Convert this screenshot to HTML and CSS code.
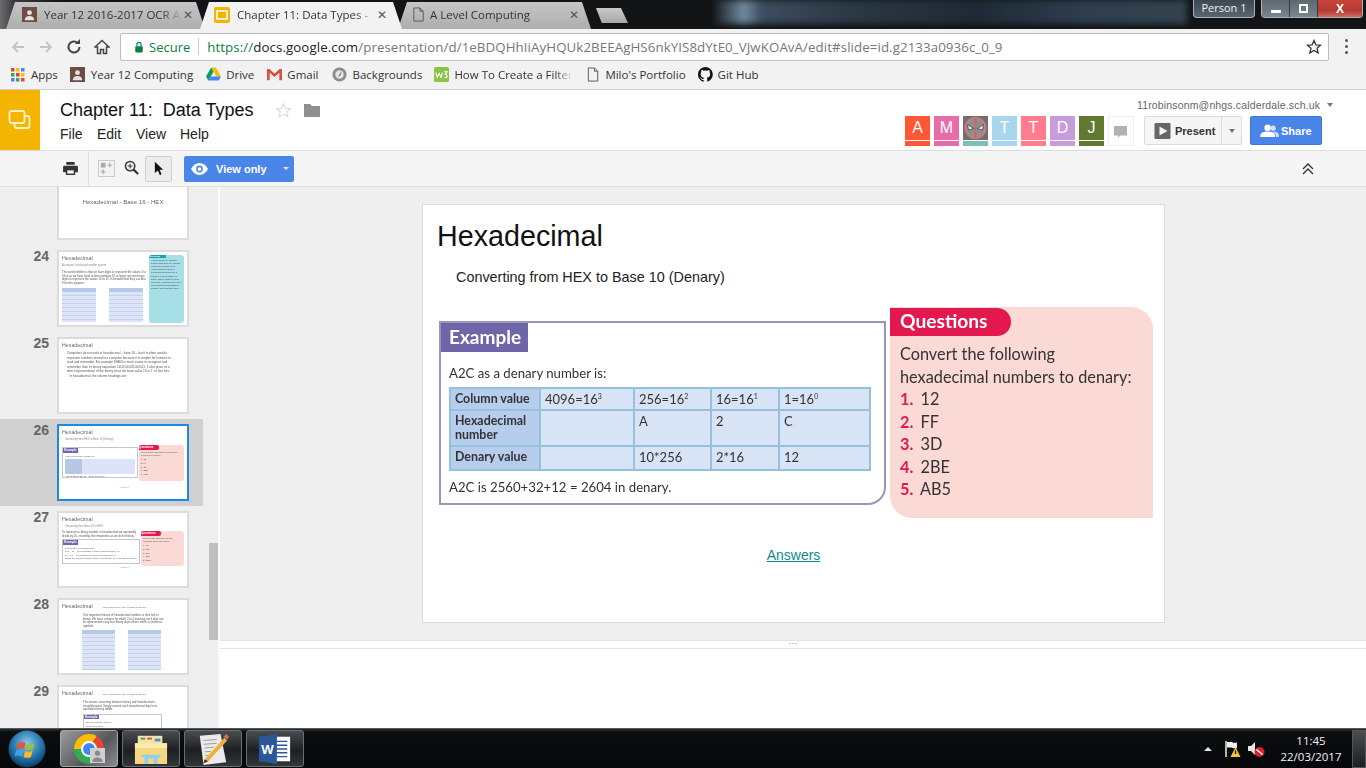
FILE: index.html
```html
<!DOCTYPE html>
<html lang="en">
<head>
<meta charset="utf-8">
<title>Chapter 11: Data Types</title>
<link rel="stylesheet" href="styles.css">
</head>
<body>
<div class="screen">

<header class="titlebar">
  <div class="tabs">
    <div class="tab tab-one">
      <svg class="fav" viewBox="0 0 16 16"><rect width="16" height="16" fill="#6d4c41"/><circle cx="8" cy="6" r="2.6" fill="#e8e0dc"/><path d="M3 14c0-3 2-4.5 5-4.5s5 1.500 5 4.500z" fill="#e8e0dc"/></svg>
      <span class="tab-title">Year 12 2016-2017 OCR A</span>
      <span class="tab-x">✕</span>
    </div>
    <div class="tab tab-two">
      <svg class="fav" viewBox="0 0 16 16"><rect width="16" height="16" rx="2" fill="#f4b400"/><rect x="3" y="4" width="10" height="8" fill="none" stroke="#fff" stroke-width="1.600"/></svg>
      <span class="tab-title">Chapter 11: Data Types -</span>
      <span class="tab-x">✕</span>
    </div>
    <div class="tab tab-three">
      <svg class="fav" viewBox="0 0 16 16"><path d="M3 1h6.500L13 4.500V15H3z M9.500 1v3.500H13" fill="none" stroke="#555" stroke-width="1"/></svg>
      <span class="tab-title">A Level Computing</span>
      <span class="tab-x">✕</span>
    </div>
    <div class="newtab"></div>
  </div>
  <div class="desktop-blur"></div>
  <div class="profile">Person 1</div>
  <div class="winbtns">
    <span class="wb"><i class="wb-min"></i></span>
    <span class="wb"><i class="wb-max"></i></span>
    <span class="wb wb-close">X</span>
  </div>
</header>

<div class="navbar">
  <svg class="nav-ic" viewBox="0 0 16 16"><path d="M14 8H3M8 3L3 8l5 5" fill="none" stroke="#c4c4c4" stroke-width="1.800"/></svg>
  <svg class="nav-ic" viewBox="0 0 16 16"><path d="M2 8h11M8 3l5 5-5 5" fill="none" stroke="#c4c4c4" stroke-width="1.800"/></svg>
  <svg class="nav-ic" viewBox="0 0 16 16"><path d="M13.500 8A5.500 5.500 0 1 1 11.800 4" fill="none" stroke="#444" stroke-width="2"/><path d="M9 5h5V0z" fill="#444"/></svg>
  <svg class="nav-ic" viewBox="0 0 16 16"><path d="M8 1.500L1 8h2.500v6.500h3v-4h3v4h3V8H15z" fill="none" stroke="#444" stroke-width="1.500"/></svg>
  <div class="omnibox">
    <svg class="lock" viewBox="0 0 12 14"><rect x="1.500" y="6" width="9" height="7.500" rx="1" fill="#0b8043"/><path d="M3.500 6V4a2.500 2.500 0 0 1 5 0v2" fill="none" stroke="#0b8043" stroke-width="1.400"/></svg>
    <span class="secure">Secure</span>
    <span class="omni-sep"></span>
    <span class="url"><b class="u-https">https://</b><b class="u-host">docs.google.com</b>/presentation/d/1eBDQHhIiAyHQUk2BEEAgHS6nkYIS8dYtE0_VJwKOAvA/edit#slide=id.g2133a0936c_0_9</span>
    <svg class="star" viewBox="0 0 16 16"><path d="M8 1.500l1.900 4.300 4.600.4-3.500 3 1.100 4.600L8 11.400l-4.100 2.400L5 9.200l-3.500-3 4.600-.4z" fill="none" stroke="#333" stroke-width="1.300"/></svg>
  </div>
  <div class="kebab"><i></i><i></i><i></i></div>
</div>

<nav class="bookmarks">
  <div class="bm bm-apps">
    <svg class="bm-ic" viewBox="0 0 14 14"><g><rect width="3.500" height="3.500" fill="#ea4335"/><rect x="5" width="3.500" height="3.500" fill="#fbbc05"/><rect x="10" width="3.500" height="3.500" fill="#4285f4"/><rect y="5" width="3.500" height="3.500" fill="#34a853"/><rect x="5" y="5" width="3.500" height="3.500" fill="#ea4335"/><rect x="10" y="5" width="3.500" height="3.500" fill="#fbbc05"/><rect y="10" width="3.500" height="3.500" fill="#4285f4"/><rect x="5" y="10" width="3.500" height="3.500" fill="#34a853"/><rect x="10" y="10" width="3.500" height="3.500" fill="#ea4335"/></g></svg>
    <span>Apps</span>
  </div>
  <div class="bm bm-year">
    <svg class="bm-ic" viewBox="0 0 16 16"><rect width="16" height="16" fill="#6d4c41"/><circle cx="8" cy="6" r="2.600" fill="#e8e0dc"/><path d="M3 14c0-3 2-4.500 5-4.500s5 1.500 5 4.500z" fill="#e8e0dc"/></svg>
    <span>Year 12 Computing</span>
  </div>
  <div class="bm bm-drive">
    <svg class="bm-ic" viewBox="0 0 16 15"><path d="M5.500 0h5l5.500 9.500h-5z" fill="#fbbc05"/><path d="M5.500 0L0 9.500 2.500 14l5.500-9.500z" fill="#0f9d58"/><path d="M2.500 14h11l2.500-4.500H5z" fill="#4285f4"/></svg>
    <span>Drive</span>
  </div>
  <div class="bm bm-gmail">
    <svg class="bm-ic" viewBox="0 0 16 14"><path d="M0 1h2.500L8 6l5.500-5H16v12h-3V5.500L8 10 3 5.500V13H0z" fill="#d9503f"/><path d="M3 5.500L8 10l5-4.500V13H3z" fill="#eee"/></svg>
    <span>Gmail</span>
  </div>
  <div class="bm bm-back">
    <svg class="bm-ic" viewBox="0 0 16 16"><circle cx="8" cy="8" r="7.500" fill="#8c8c8c"/><circle cx="8" cy="8" r="4.500" fill="#e4e4e4"/><path d="M10 4.500L6 11l3.500-2.500z" fill="#777"/></svg>
    <span>Backgrounds</span>
  </div>
  <div class="bm bm-how">
    <svg class="bm-ic" viewBox="0 0 16 16"><rect width="16" height="16" rx="2" fill="#8bc34a"/><path d="M2 6l1.500 5L5.500 7l2 4L9 6M11 5h3l-2 3c1.500 0 2 1 2 2s-1 2-3 1" fill="none" stroke="#fff" stroke-width="1.200"/></svg>
    <span class="fade">How To Create a Filter</span>
  </div>
  <div class="bm bm-milo">
    <svg class="bm-ic bm-doc" viewBox="0 0 12 16"><path d="M1 1h6.500L11 4.500V15H1z M7.500 1v3.500H11" fill="none" stroke="#555" stroke-width="1"/></svg>
    <span>Milo's Portfolio</span>
  </div>
  <div class="bm">
    <svg class="bm-ic" viewBox="0 0 16 16"><path fill="#111" d="M8 0a8 8 0 0 0-2.500 15.600c.4.100.5-.2.500-.4v-1.400c-2.200.5-2.700-1-2.700-1-.4-.9-.9-1.200-.9-1.200-.7-.5.100-.5.100-.5.800.1 1.200.8 1.200.8.700 1.200 1.900.9 2.300.7.100-.5.300-.9.500-1.100-1.800-.2-3.700-.9-3.700-4 0-.9.300-1.600.8-2.100-.1-.2-.4-1 .1-2.100 0 0 .7-.2 2.200.8a7.500 7.500 0 0 1 4 0c1.500-1 2.200-.8 2.200-.8.400 1.100.2 1.900.1 2.100.5.600.8 1.300.8 2.100 0 3.100-1.900 3.700-3.700 3.900.3.300.6.800.6 1.500v2.200c0 .2.100.5.600.4A8 8 0 0 0 8 0z"/></svg>
    <span>Git Hub</span>
  </div>
</nav>

<div class="appbar">
  <div class="logo">
    <svg viewBox="0 0 24 22" class="logo-ic"><rect x="6.500" y="7" width="15" height="12" rx="2" fill="none" stroke="#fff3c4" stroke-width="1.800"/><rect x="1.500" y="2" width="15" height="12" rx="2" fill="#f4b400" stroke="#fff3c4" stroke-width="1.800"/></svg>
  </div>
  <div class="docinfo">
    <div class="docrow">
      <span class="doctitle">Chapter 11:  Data Types</span>
      <svg class="docstar" viewBox="0 0 16 16"><path d="M8 1.500l1.900 4.300 4.600.4-3.500 3 1.100 4.600L8 11.400l-4.100 2.400L5 9.200l-3.500-3 4.600-.4z" fill="none" stroke="#d9d9d9" stroke-width="1"/></svg>
      <svg class="docfolder" viewBox="0 0 16 14"><path d="M0 1h6l2 2h8v11H0z" fill="#8f8f8f"/></svg>
    </div>
    <div class="menu"><span>File</span><span>Edit</span><span>View</span><span>Help</span></div>
  </div>
  <div class="appright">
    <div class="account">11robinsonm@nhgs.calderdale.sch.uk<i class="caret caret-gray"></i></div>
    <div class="collab">
      <div class="avatar av-a"><span>A</span></div>
      <div class="avatar av-m"><span>M</span></div>
      <div class="avatar av-d">
        <span class="dp"><svg viewBox="0 0 25 24"><rect width="25" height="24" fill="#6f6f6f"/><circle cx="12.500" cy="12" r="10" fill="#8e8e8e" stroke="#cf7a7e" stroke-width="1.800"/><rect x="11.500" y="2" width="2" height="20" fill="#c9656a"/><path d="M4.500 8.500l6 4-5 1.500z" fill="#eeeeee" stroke="#333" stroke-width=".7"/><path d="M20.500 8.500l-6 4 5 1.500z" fill="#eeeeee" stroke="#333" stroke-width=".7"/></svg></span>
      </div>
      <div class="avatar av-t1"><span>T</span></div>
      <div class="avatar av-t2"><span>T</span></div>
      <div class="avatar av-dd"><span>D</span></div>
      <div class="avatar av-j"><span>J</span></div>
      <div class="comment"><svg viewBox="0 0 14 14"><path d="M0 1h13v9.500H6l-2 2.500v-2.500H0z" fill="#b2b2b2"/></svg></div>
      <div class="present">
        <span class="present-main"><svg viewBox="0 0 16 16"><rect width="16" height="16" rx="1" fill="#666"/><path d="M5 3.500l8 4.500-8 4.500z" fill="#f5f5f5"/></svg>Present</span>
        <span class="present-drop"><i class="caret caret-gray"></i></span>
      </div>
      <div class="share"><svg viewBox="0 0 20 14"><circle cx="8" cy="4" r="3.500" fill="#fff"/><path d="M0 13c0-3.500 3.500-5 8-5s8 1.500 8 5v1H0z" fill="#fff"/><circle cx="14" cy="4.500" r="2.800" fill="#cfe0fb"/><path d="M13 8c3.500 0 7 1 7 4v2h-3c0-3-1.500-4.500-4-6z" fill="#cfe0fb"/></svg>Share</div>
    </div>
  </div>
</div>

<div class="toolbar">
  <svg class="tb-print" viewBox="0 0 16 14"><path d="M3.500 0h9v3h-9zM1.500 4h13A1.500 1.500 0 0 1 16 5.500V11h-3v3H3v-3H0V5.500A1.500 1.500 0 0 1 1.500 4z" fill="#333"/><rect x="4.500" y="9" width="7" height="3.500" fill="#f5f5f5"/></svg>
  <span class="tb-sep"></span>
  <svg class="tb-grid" viewBox="0 0 18 18"><rect x=".5" y=".5" width="17" height="17" fill="#f3f3f3" stroke="#c7c7c7"/><rect x="3" y="3" width="5" height="5" fill="#aaa"/><path d="M12.500 3v5M10 5.500h5M5.500 10v5M3 12.500h5" stroke="#aaa" stroke-width="1.200"/></svg>
  <svg class="tb-zoom" viewBox="0 0 16 16"><circle cx="6.500" cy="6.500" r="5" fill="none" stroke="#333" stroke-width="1.600"/><path d="M10 10l5 5" stroke="#333" stroke-width="2.400"/><path d="M6.500 4v5M4 6.500h5" stroke="#333" stroke-width="1.100"/></svg>
  <span class="tb-cursor"><svg viewBox="0 0 12 16"><path d="M1 0l10 9.500H6.800L9 15l-2 1-2.200-5.500L1 13.500z" fill="#111"/></svg></span>
  <div class="viewonly">
    <svg viewBox="0 0 20 14"><path d="M0 7c2.500-4.500 6-7 10-7s7.500 2.500 10 7c-2.500 4.500-6 7-10 7S2.500 11.500 0 7z" fill="#fff"/><circle cx="10" cy="7" r="4" fill="#4a86e8"/><circle cx="10" cy="7" r="2.200" fill="#fff"/></svg>
    <span>View only</span>
    <i class="caret caret-white"></i>
  </div>
  <svg class="tb-collapse" viewBox="0 0 12 12"><path d="M1 6l5-5 5 5M1 11l5-5 5 5" fill="none" stroke="#333" stroke-width="1.400"/></svg>
</div>

<main class="workspace">
  <aside class="filmstrip">
    <div class="thumbs">
      <div class="row">
        <span class="num"></span>
        <div class="thumb"><p class="t23">Hexadecimal - Base 16 - HEX</p></div>
      </div>
      <div class="row">
        <span class="num">24</span>
        <div class="thumb t-split">
          <div class="t-left">
            <p class="t-h">Hexadecimal</p>
            <p class="t-s">A compact, hex-based number system</p>
            <p class="t-p">The word problem is that we have digits to represent the values 0 to 9 but as we have head to form numbers 10 or larger we need more digits to represent the values 10 to 15. In hexadecimal they use A to F for this purpose.</p>
            <div class="t-tables"><div class="mini mini-24"></div><div class="mini mini-24"></div></div>
          </div>
          <div class="t-key"><b>Key points</b><p>Hexadecimal is a number system based on 16, column values are powers of 16. Hexadecimal is used in computing because it is a concise representation of binary that is easier to read and write. Programmers use it for colours and addresses in memory and machine code.</p></div>
        </div>
      </div>
      <div class="row">
        <span class="num">25</span>
        <div class="thumb">
          <p class="t-h">Hexadecimal</p>
          <p class="t-p t-p25">Computers do not work in <em>hexadecimal</em> – base 16 – but it is often used to represent numbers stored in a computer because it is simpler for humans to read and remember. For example 1FA63 is much easier to recognise and remember than its binary equivalent 11111010011000011. It also gives us a direct representation of the binary since the base value 16 is 2⁴ or four bits.<br>&nbsp;&nbsp;&nbsp;In hexadecimal, the column headings are:</p>
        </div>
      </div>
      <div class="row row-selected">
        <span class="num">26</span>
        <div class="thumb thumb-selected">
          <p class="t-h">Hexadecimal</p>
          <p class="t-s t-s26">Converting from HEX to Base 10 (Denary)</p>
          <div class="t-fig">
            <div class="t-ex">
              <b class="t-exh">Example</b>
              <p>A2C as a denary number is:</p>
              <div class="mini mini-26"></div>
              <p>A2C is 2560+32+12 = 2604 in denary.</p>
            </div>
            <div class="t-q">
              <b class="t-qh">Questions</b>
              <p>Convert the following hexadecimal numbers to denary:<br>1. 12<br>2. FF<br>3. 3D<br>4. 2BE<br>5. AB5</p>
            </div>
          </div>
          <p class="t-ans">Answers</p>
        </div>
      </div>
      <div class="row">
        <span class="num">27</span>
        <div class="thumb">
          <p class="t-h">Hexadecimal</p>
          <p class="t-s t-s26">Converting from Base 10 to HEX</p>
          <div class="t-fig t-fig27">
            <div class="t-col27">
              <p class="t-p">To represent a binary number in hexadecimal we repeatedly divide by 16, recording the remainders as we do for binary.</p>
              <div class="t-ex t-ex27">
                <b class="t-exh">Example</b>
                <p>168 denary in hexadecimal:</p>
                <p>168 ÷ 16 = 10 remainder 8 (this is hexadecimal A 8)</p>
                <p>10 ÷ 16 = 0 remainder 10 (this is hexadecimal A)</p>
                <p>Using our column system above, 168 denary is A8 hexadecimal too.</p>
              </div>
            </div>
            <div class="t-q t-q27">
              <b class="t-qh">Questions</b>
              <p>Convert the following denary numbers to hexadecimal:<br>1. 48<br>2. 138<br>3. 127<br>4. 255<br>5. 2500</p>
            </div>
          </div>
          <p class="t-ans t-ans27">Answers</p>
        </div>
      </div>
      <div class="row">
        <span class="num">28</span>
        <div class="thumb">
          <p class="t-h t-hin">Hexadecimal<small>Converting from HEX to Base 2 (binary)</small></p>
          <p class="t-p t-pc">One important feature of hexadecimal numbers is their link to binary. We have columns for which 2 to 4 meaning each digit can be represented using four binary digits where which is shown as symbols.</p>
          <div class="t-tables t-tables28"><div class="mini mini-28"></div><div class="mini mini-28"></div></div>
        </div>
      </div>
      <div class="row">
        <span class="num">29</span>
        <div class="thumb">
          <p class="t-h t-hin">Hexadecimal<small>Converting from HEX to Base 2 (binary)</small></p>
          <p class="t-p t-pc">This means converting between binary and hexadecimal is straightforward. Simply convert each hexadecimal digit to its equivalent binary nibble.</p>
          <div class="t-ex t-ex29">
            <b class="t-exh">Example</b>
            <p>1D8 as a binary value is</p>
            <p>0001 1101 1000</p>
          </div>
        </div>
      </div>
    </div>
    <div class="scrolltrack"><div class="scrollthumb"></div></div>
  </aside>

  <section class="editor">
    <div class="canvas">
      <article class="slide">
        <h1>Hexadecimal</h1>
        <p class="subtitle">Converting from HEX to Base 10 (Denary)</p>
        <div class="figures">
          <div class="example">
            <h2>Example</h2>
            <p class="ex-lead">A2C as a denary number is:</p>
            <table class="hex">
              <tr class="r1"><th>Column value</th><td>4096=16<sup>3</sup></td><td>256=16<sup>2</sup></td><td>16=16<sup>1</sup></td><td>1=16<sup>0</sup></td></tr>
              <tr class="r2"><th>Hexadecimal number</th><td></td><td>A</td><td>2</td><td>C</td></tr>
              <tr class="r3"><th>Denary value</th><td></td><td>10*256</td><td>2*16</td><td>12</td></tr>
            </table>
            <p class="ex-foot">A2C is 2560+32+12 = 2604 in denary.</p>
          </div>
          <div class="questions">
            <h2>Questions</h2>
            <p>Convert the following<br>hexadecimal numbers to denary:</p>
            <ol>
              <li><b>1.</b> 12</li>
              <li><b>2.</b> FF</li>
              <li><b>3.</b> 3D</li>
              <li><b>4.</b> 2BE</li>
              <li><b>5.</b> AB5</li>
            </ol>
          </div>
        </div>
        <p class="answers"><a>Answers</a></p>
      </article>
    </div>
    <div class="sash"><span class="dots">···</span></div>
    <div class="notes"></div>
  </section>
</main>

<footer class="taskbar">
  <div class="orb">
    <svg viewBox="0 0 38 38"><defs><radialGradient id="og" cx=".5" cy=".35" r=".7"><stop offset="0" stop-color="#8cc6ec"/><stop offset=".6" stop-color="#1f6fa8"/><stop offset="1" stop-color="#0c2f4c"/></radialGradient></defs><circle cx="19" cy="19" r="18.500" fill="url(#og)"/><path d="M10 13c3-1.500 5-1 7.500 0l-1.500 6c-2.500-1-4.500-1.500-7.500 0z" fill="#e8553a"/><path d="M19 13.500c2.500 1 5 1.200 7.500-.2L25 19.500c-2.500 1.300-5 1-7.500 0z" fill="#8fc63f"/><path d="M8 20.500c3-1.500 5-1 7.500 0L14 26.500c-2.500-1-4.500-1.500-7.500 0z" fill="#4a9fe0"/><path d="M17 21c2.500 1 5 1.200 7.500-.2L23 27c-2.500 1.300-5 1-7.500 0z" fill="#f5b932"/></svg>
  </div>
  <div class="task task-active">
    <span class="chrome"><i></i></span>
    <svg class="badge" viewBox="0 0 16 16"><rect width="16" height="16" fill="#cfcfcf"/><circle cx="8" cy="5.500" r="2.800" fill="#8a8a8a"/><path d="M2.500 15c0-3.500 2.500-5 5.500-5s5.500 1.500 5.500 5z" fill="#8a8a8a"/></svg>
  </div>
  <div class="task">
    <svg class="task-ic" viewBox="0 0 36 36"><path d="M4 4h26v10H4z" fill="#f3e3a6"/><rect x="7" y="6" width="5" height="2" fill="#3aa655"/><rect x="14" y="6" width="5" height="2" fill="#d9503f"/><rect x="22" y="7" width="6" height="3" fill="#4a90d9"/><path d="M1 12h34v22H1z" fill="#f6d77f"/><path d="M1 12h34v5H1z" fill="#fbeab0"/><path d="M8 24h20v3h-3v7h-4v-6h-6v6h-4v-7H8z" fill="#8fd0ea"/></svg>
  </div>
  <div class="task">
    <svg class="task-ic" viewBox="0 0 36 36"><path d="M4 4l22-2 6 30-24 3z" fill="#eaeaea"/><path d="M8 9l14-1M8 13l14-1M9 17l10-1M9 21l7-.5M10 25l6-.5" stroke="#999" stroke-width="1"/><path d="M9 29L30 6l3 3L14 30l-6 3z" fill="#f0b13c"/><path d="M29 5l3-3 3 3-2 3z" fill="#d66"/><path d="M8 33l1-4 4 2z" fill="#333"/></svg>
  </div>
  <div class="task">
    <svg class="task-ic" viewBox="0 0 36 36"><rect x="13" y="5" width="21" height="26" fill="#fff"/><path d="M18 10h13M18 14h13M18 18h13M18 22h13M18 26h13" stroke="#2b579a" stroke-width="1.400"/><path d="M1 5l19-3v32L1 31z" fill="#2b579a"/><text x="3.500" y="23" font-size="14" font-weight="700" fill="#fff" font-family="Liberation Sans, sans-serif">W</text></svg>
  </div>
  <div class="tray">
    <i class="tray-up"></i>
    <svg class="tray-flag" viewBox="0 0 18 18"><path d="M3 1v16" stroke="#fff" stroke-width="1.400"/><path d="M4 2h5c1 1 3 1 5 .5V8c-2 .5-4 .5-5-.5H4z" fill="#eee"/><path d="M12.500 7l5 10h-10z" fill="#f2c53d"/><path d="M12.500 10.500v3.500" stroke="#222" stroke-width="1.400"/></svg>
    <svg class="tray-sound" viewBox="0 0 18 18"><path d="M1 6h3l4-4v13l-4-4H1z" fill="#e6e6e6"/><circle cx="12.500" cy="12" r="5" fill="#d8202f"/><path d="M9.500 9.500l6 5" stroke="#fff" stroke-width="1.600"/></svg>
    <div class="clock"><span>11:45</span><span>22/03/2017</span></div>
    <div class="showdesk"></div>
  </div>
</footer>

</div>
</body>
</html>
```

FILE: styles.css
```css
* { box-sizing: border-box; }
html, body { margin: 0; padding: 0; background: #fff; }
p, h1, h2, ol { margin: 0; padding: 0; }
.screen { width: 1366px; height: 768px; overflow: hidden; display: flex; flex-direction: column; font-family: "Liberation Sans", Arial, sans-serif; color: #222; }

/* window title strip */
.titlebar { height: 29px; flex: none; display: flex; background: linear-gradient(90deg, #6b6d6f 0, #3a3c3e 14px, #121416 60px, #121416 700px); overflow: hidden; }
.tabs { display: flex; align-items: flex-end; padding-left: 6px; width: 715px; flex: none; }
.tab { height: 27px; display: flex; align-items: center; padding-bottom: 2px; font: 11.500px "Open Sans", sans-serif; color: #333; background: linear-gradient(#c6c6c6, #adadad); clip-path: polygon(0 100%, 9px 0, calc(100% - 9px) 0, 100% 100%); }
.tab-one { width: 199px; padding-left: 16px; padding-right: 11px; }
.tab-two { width: 202px; margin-left: -5px; padding-left: 14px; padding-right: 14px; background: #f2f2f2; position: relative; z-index: 2; }
.tab-three { width: 193px; margin-left: -4px; padding-left: 13px; padding-right: 11px; }
.fav { width: 15px; height: 15px; flex: none; margin-right: 7px; }
.tab-two .fav { width: 16px; height: 16px; }
.tab-three .fav { margin-right: 4px; }
.tab-title { flex: 1; white-space: nowrap; overflow: hidden; mask-image: linear-gradient(90deg, #000 85%, transparent); -webkit-mask-image: linear-gradient(90deg, #000 85%, transparent); }
.tab-x { font-size: 12px; color: #555; font-family: "DejaVu Sans", sans-serif; font-weight: 700; width: 12px; text-align: center; }
.newtab { width: 32px; height: 15px; margin: 0 0 6px 5px; background: linear-gradient(#c8c8c8, #a8a8a8); clip-path: polygon(0 0, 78% 0, 100% 100%, 18% 100%); }
.desktop-blur { width: 472px; flex: none; margin-top: 0; background: linear-gradient(90deg, #1a2026, #6f8ba0 6%, #3c4c5c 10%, #2a3844 30%, #1e2a36 55%, #2f3f4e 80%, #33434f); background-size: 100% 100%; filter: blur(3px); height: 24px; }
.profile { width: 62px; height: 18px; margin-left: 6px; flex: none; border: 1px solid #a8b4bc; border-top: 0; border-radius: 0 0 4px 4px; color: #f0f0f0; font: 11px/16px "Open Sans", sans-serif; text-align: center; background: linear-gradient(#3c4853, #59656f); }
.winbtns { display: flex; height: 18px; margin-left: 6px; width: 102px; flex: none; border: 1px solid #a8b4bc; border-top: 0; border-radius: 0 0 4px 4px; overflow: hidden; }
.wb { width: 28px; display: flex; align-items: center; justify-content: center; background: linear-gradient(#5d6973, #7a858e); border-right: 1px solid #2f3a44; }
.wb-min { width: 10px; height: 3px; background: #fff; margin-top: 5px; }
.wb-max { width: 9px; height: 9px; border: 2px solid #fff; }
.wb-close { flex: 1; border: 0; background: linear-gradient(#c9433a, #b23a32 60%, #cf6a60); color: #fff; font: 700 12px "Liberation Sans", sans-serif; }

/* address bar */
.navbar { height: 35px; flex: none; display: flex; align-items: center; background: #f2f2f2; padding-left: 10px; }
.nav-ic { width: 16px; height: 16px; margin-right: 12px; flex: none; }
.omnibox { width: 1209px; margin-left: -2px; height: 28px; background: #fff; border: 1px solid #bdbdbd; border-radius: 2px; display: flex; align-items: center; padding-left: 13px; font: 14px "Open Sans", sans-serif; }
.lock { width: 10px; height: 12px; flex: none; margin-right: 5px; }
.secure { color: #0b8043; font-size: 13px; }
.omni-sep { width: 1px; height: 17px; background: #ccc; margin: 0 8px; }
.url { flex: 1; color: #777; font-size: 13.300px; white-space: nowrap; letter-spacing: .08px; }
.url b { font-weight: 400; }
.u-https { color: #0b8043; }
.u-host { color: #222; }
.star { width: 16px; height: 16px; margin-right: 6px; flex: none; }
.kebab { display: flex; flex-direction: column; gap: 3px; margin-left: 16px; }
.kebab i { width: 3px; height: 3px; background: #555; border-radius: 50%; }

/* bookmarks */
.bookmarks { height: 26px; flex: none; display: flex; align-items: center; padding: 0 0 4px 11px; background: #f2f2f2; border-bottom: 1px solid #d0d0d0; font: 11.500px "Open Sans", sans-serif; color: #333; }
.bm { display: flex; align-items: center; gap: 5px; margin-right: 13px; white-space: nowrap; }
.bm-ic { width: 15px; height: 15px; flex: none; }
.bm-apps { gap: 6px; margin-right: 12px; }
.bm-apps .bm-ic { width: 14px; height: 14px; }
.bm-year { gap: 6px; }
.bm-back { gap: 6px; margin-right: 12px; }
.bm-doc { width: 12px; }
.bm-milo { gap: 6px; margin-right: 12px; }
.bm-how { width: 136px; overflow: hidden; margin-right: 17px; }
.fade { mask-image: linear-gradient(90deg, #000 85%, transparent); -webkit-mask-image: linear-gradient(90deg, #000 85%, transparent); }

/* docs header */
.appbar { height: 61px; flex: none; display: flex; background: #fff; border-bottom: 1px solid #dcdcdc; }
.logo { width: 40px; height: 60px; background: #f4b400; display: flex; align-items: center; justify-content: center; }
.logo-ic { width: 24px; height: 22px; }
.docinfo { margin-left: 20px; padding-top: 9px; }
.docrow { display: flex; align-items: center; height: 22px; }
.doctitle { font-size: 18px; white-space: pre; color: #111; width: 194px; letter-spacing: 0; }
.docstar { width: 17px; height: 17px; margin-left: 21px; }
.docfolder { width: 16px; height: 14px; margin-left: 12px; }
.menu { display: flex; margin-top: 5px; font-size: 14px; color: #222; }
.menu span:nth-child(1) { width: 37px; }
.menu span:nth-child(2) { width: 39px; }
.menu span:nth-child(3) { width: 44px; }
.appright { margin-left: auto; width: 461px; margin-right: 0; padding-top: 8px; }
.account { font-size: 10.500px; color: #666; height: 18px; line-height: 14px; padding-left: 232px; white-space: nowrap; display: flex; letter-spacing: .15px; }
.caret { display: inline-block; width: 0; height: 0; border: 3.500px solid transparent; border-bottom: 0; border-top: 4px solid #777; }
.caret-gray { border-top-color: #777; }
.caret-white { border-top-color: #dfe9fb; }
.account .caret { margin: 5px 0 0 7px; }
.collab { display: flex; padding-left: 0; }
.avatar { width: 25px; height: 30px; margin-right: 4px; border-bottom: 5px solid; background-clip: padding-box; position: relative; color: #fff; font-size: 16px; font-weight: 400; text-align: center; }
.avatar span { display: block; height: 24px; line-height: 24px; }
.dp svg { display: block; width: 25px; height: 24px; }
.av-a { border-color: #ff5733; } .av-a span { background: #ff5733; }
.av-m { border-color: #e96caa; } .av-m span { background: #e96caa; }
.av-d { border-color: #7fbfb8; }
.av-t1 { border-color: #a9d6ef; } .av-t1 span { background: #a9d6ef; }
.av-t2 { border-color: #ff7b8e; } .av-t2 span { background: #ff7b8e; }
.av-dd { border-color: #c89bdb; } .av-dd span { background: #c89bdb; }
.av-j { border-color: #5f7a2e; } .av-j span { background: #5f7a2e; }
.comment { width: 26px; height: 30px; border: 1px solid #f0f0f0; margin-right: 10px; display: flex; align-items: center; justify-content: center; }
.comment svg { width: 14px; height: 14px; margin-top: 2px; }
.present { width: 98px; height: 29px; display: flex; border: 1px solid #dcdcdc; border-radius: 2px; background: #f5f5f5; margin-right: 8px; font-size: 11px; font-weight: 700; color: #333; }
.present-main { width: 77px; display: flex; align-items: center; gap: 4px; padding-left: 9px; border-right: 1px solid #dcdcdc; }
.present-main svg { width: 17px; height: 16px; }
.present-drop { flex: 1; display: flex; align-items: center; justify-content: center; }
.share { width: 72px; height: 29px; background: #4a86e8; border: 1px solid #3f78d8; border-radius: 2px; color: #fff; font-size: 11px; font-weight: 700; display: flex; align-items: center; gap: 2px; padding-left: 9px; }
.share svg { width: 19px; height: 13px; }

/* tools */
.toolbar { height: 36px; flex: none; display: flex; align-items: center; background: #f5f5f5; border-bottom: 1px solid #dedede; position: relative; }
.tb-print { width: 15px; height: 13px; margin-left: 63px; }
.tb-sep { width: 1px; height: 35px; background: #e2e2e2; margin-left: 10px; }
.tb-grid { width: 17px; height: 17px; margin-left: 9px; }
.tb-zoom { width: 15px; height: 15px; margin-left: 9px; margin-top: -3px; }
.tb-cursor { width: 27px; height: 26px; margin-left: 6px; background: #ececec; border: 1px solid #d0d0d0; border-radius: 2px; display: flex; align-items: center; justify-content: center; }
.tb-cursor svg { width: 10px; height: 15px; }
.viewonly { width: 110px; height: 26px; margin-left: 12px; background: #4a86e8; border-radius: 2px; color: #fff; font-size: 11px; font-weight: 700; display: flex; align-items: center; padding-left: 7px; }
.viewonly svg { width: 17px; height: 12px; margin-right: 8px; }
.viewonly .caret { margin-left: 16px; border-width: 3px; border-top-width: 3px; border-bottom: 0; }
.tb-collapse { width: 12px; height: 12px; margin-left: auto; margin-right: 52px; }

/* body */
.workspace { flex: 1; display: flex; min-height: 0; background: #fff; }
.filmstrip { width: 220px; flex: none; display: flex; background: #eeeeee; border-right: 2px solid #fafafa; overflow: hidden; }
.thumbs { width: 203px; flex: none; margin-top: -29px; }
.row { height: 87px; display: flex; align-items: center; padding: 0; overflow: visible; }
.row-selected { background: #d0d0d0; }
.num { width: 57px; flex: none; text-align: right; padding-right: 8px; align-self: flex-start; margin-top: 3px; font-size: 14px; font-weight: 700; color: #666; line-height: 16px; }
.thumb { width: 132px; height: 77px; flex: none; background: #fff; border: 2px solid #dcdcdc; overflow: hidden; padding: 3px 3px 0; filter: blur(.25px); font-size: 3px; line-height: 3.700px; color: #555; }
.thumb-selected { border-color: #1e88e5; }
.t23 { font-size: 6.100px; line-height: 8px; text-align: center; margin-top: 30px; color: #666; }
.t-h { font-size: 5.300px; line-height: 7px; color: #666; white-space: nowrap; }
.t-hin small { font-size: 2.500px; margin-left: 10px; }
.t-s { font-size: 2.600px; line-height: 4px; color: #888; margin-top: 2px; white-space: nowrap; }
.t-s26 { margin-left: 3px; margin-top: 2px; }
.t-p { font-size: 2.800px; line-height: 3.600px; color: #555; }
.t-p em { font-style: normal; color: #3a7a3a; }
.t-p25 { padding: 2px 12px 0 5px; font-size: 3.100px; line-height: 4.600px; }
.t-pc { padding: 3px 20px 0 21px; }
.t-split { display: flex; gap: 3px; }
.t-left { width: 84px; flex: none; }
.t-left .t-p { margin-top: 3px; }
.t-tables { display: flex; gap: 13px; margin-top: 3px; }
.mini { background-color: #dbe5f7; background-image: linear-gradient(#b6c8e6 0, #b6c8e6 4px, transparent 4px), repeating-linear-gradient(#dbe5f7 0, #dbe5f7 3.300px, #c3d0e6 3.300px, #c3d0e6 4px); }
.mini-24 { width: 34px; height: 34px; }
.mini-26 { height: 15px; margin: 1px 0; background-image: linear-gradient(90deg, #b6c8e6 0, #b6c8e6 17px, transparent 17px), repeating-linear-gradient(#dbe5f7 0, #dbe5f7 4.500px, #a8c6de 4.500px, #a8c6de 5px); }
.mini-28 { width: 33px; height: 40px; }
.t-tables28 { justify-content: center; gap: 13px; margin-top: 2px; padding: 0 3px 0 0; }
.t-key { width: 37px; height: 68px; background: #a6dfe6; border-radius: 3px; padding: 1px 2px; font-size: 2.300px; line-height: 3.100px; overflow: hidden; color: #446; }
.t-key b { display: block; background: #13a3b5; color: #fff; width: 17px; margin: -1px 0 1px -2px; font-size: 2.200px; }
.t-fig { display: flex; gap: 1px; align-items: flex-start; margin-top: 3px; }
.t-ex { width: 77px; border: 1px solid #c4c1da; font-size: 2.400px; line-height: 3.500px; margin-top: 2px; height: 31px; padding: 0 2px; }
.t-exh { display: block; width: 15px; background: #6e66a8; color: #fff; margin: 0 0 2px -2px; font-size: 3px; line-height: 4.500px; text-align: center; }
.t-q { width: 46px; height: 36px; background: #fbdad6; border-radius: 3px; font-size: 2.400px; line-height: 3.800px; padding: 0 2px; color: #555; }
.t-qh { display: block; width: 20px; background: #e2184f; color: #fff; margin: 0 0 1px -2px; font-size: 3px; line-height: 4.500px; border-radius: 0 2px 2px 0; }
.t-ans { text-align: center; font-size: 2.400px; color: #77a9a9; margin-top: 5px; padding-left: 2px; }
.t-fig27 { margin-top: 2px; }
.t-col27 { width: 79px; }
.t-ex27 { width: 78px; height: 25px; margin-top: 1px; }
.t-q27 { width: 44px; height: 35px; }
.t-ans27 { margin-top: 0; }
.t-ex29 { width: 79px; margin: 2px 0 0 21px; height: 17px; }
.scrolltrack { width: 15px; flex: none; padding: 356px 0 0 6px; }
.scrollthumb { width: 9px; height: 97px; background: #bfbfbf; }
.editor { flex: 1; display: flex; flex-direction: column; min-width: 0; }
.canvas { height: 453px; background: #efefef; padding: 17px 0 0 202px; flex: none; }
.slide { width: 743px; height: 419px; background: #fff; border: 1px solid #dcdcdc; padding: 1px 0 0 14px; }
.slide h1 { font-size: 28.700px; font-weight: 400; line-height: 36px; margin-top: 12px; color: #111; }
.subtitle { font-size: 14.400px; line-height: 18px; margin: 14px 0 0 19px; color: #222; }
.figures { display: flex; align-items: flex-start; margin: 21px 0 0 2px; font-family: Lato, "Open Sans", sans-serif; filter: blur(.35px); color: #333; }
.example { width: 447px; height: 184px; margin-top: 14px; border: 2px solid #9a95bd; border-radius: 0 0 18px 0; }
.example h2 { width: 87px; height: 29px; background: #6e66a8; color: #fff; font-size: 19px; line-height: 28px; font-weight: 700; padding-left: 8px; }
.ex-lead { font-size: 13.200px; line-height: 18px; margin: 12px 0 5px 8px; }
.hex { border-collapse: collapse; width: 422px; margin-left: 8px; table-layout: fixed; font-size: 13px; line-height: 14px; }
.hex th, .hex td { border: 2px solid #93c1de; background: #d8e4f6; text-align: left; vertical-align: top; padding: 3px 0 2px 4px; font-weight: 400; }
.hex th { background: #b6cdec; font-weight: 700; width: 90px; font-size: 12.400px; }
.hex td:nth-child(2) { width: 94px; }
.hex td:nth-child(3) { width: 77px; }
.hex td:nth-child(4) { width: 68px; }
.hex sup { font-size: 7px; line-height: 0; }
.r1 { height: 22px; } .r2 { height: 36px; } .r3 { height: 24px; }
.ex-foot { font-size: 13.200px; line-height: 18px; margin: 7px 0 0 8px; }
.questions { width: 263px; height: 211px; margin-left: 4px; background: #fbdad6; border-radius: 0 22px 0 22px; font-size: 16.300px; line-height: 22.500px; padding-left: 10px; }
.questions h2 { width: 121px; height: 28px; margin: 1px 0 7px -10px; padding-left: 10px; background: #e2184f; color: #fff; border-radius: 0 14px 14px 0; font-size: 19.200px; line-height: 26px; font-weight: 700; }
.questions ol { list-style: none; }
.questions b { color: #e2184f; font-weight: 700; margin-right: 3px; }
.answers { text-align: center; margin-top: 28px; padding-right: 14px; font-size: 14px; line-height: 18px; }
.answers a { color: #0f8a8a; text-decoration: underline; }
.sash { height: 9px; flex: none; background: #fff; border-top: 1px solid #e4e4e4; border-bottom: 1px solid #e4e4e4; text-align: center; font-size: 9px; line-height: 5px; color: #888; overflow: visible; }
.notes { flex: 1; background: #fff; }

/* windows taskbar */
.taskbar { height: 40px; flex: none; display: flex; align-items: center; background: linear-gradient(#2a2d30 0, #0b0d0f 8%, #05070a 100%); border-top: 1px solid #55585c; }
.orb { width: 38px; height: 38px; margin: 0 14px 0 8px; flex: none; }
.orb svg { display: block; width: 38px; height: 38px; }
.task { width: 58px; height: 37px; margin-right: 4px; flex: none; border: 1px solid #6a6e72; border-radius: 3px; background: linear-gradient(180deg, #4a4d50, #1d1f22 55%, #33363a); display: flex; align-items: center; justify-content: center; position: relative; }
.task-active { background: linear-gradient(135deg, #9a9c9e, #55585b 60%, #8a8c8e); border-color: #a8a8a8; }
.task-ic { width: 36px; height: 34px; }
.chrome { width: 30px; height: 30px; border-radius: 50%; background: conic-gradient(from 30deg, #ea4335 0 120deg, #34a853 120deg 240deg, #fbbc05 240deg 360deg); display: flex; align-items: center; justify-content: center; }
.chrome i { width: 12px; height: 12px; border-radius: 50%; background: #4285f4; border: 2px solid #fff; box-sizing: content-box; }
.badge { position: absolute; right: 12px; bottom: 3px; width: 15px; height: 15px; }
.tray { margin-left: auto; display: flex; align-items: center; height: 38px; color: #fff; }
.tray-up { width: 0; height: 0; border: 4px solid transparent; border-top: 0; border-bottom: 4px solid #e8e8e8; margin-right: 11px; }
.tray-flag { width: 18px; height: 18px; margin-right: 6px; }
.tray-sound { width: 18px; height: 18px; }
.clock { display: flex; flex-direction: column; align-items: center; width: 78px; margin-left: 7px; font: 11.500px/16px "Open Sans", sans-serif; color: #f4f4f4; }
.showdesk { width: 14px; height: 38px; margin-left: 2px; border: 1px solid #555; background: linear-gradient(#4c4f52, #1c1e20); }
```
